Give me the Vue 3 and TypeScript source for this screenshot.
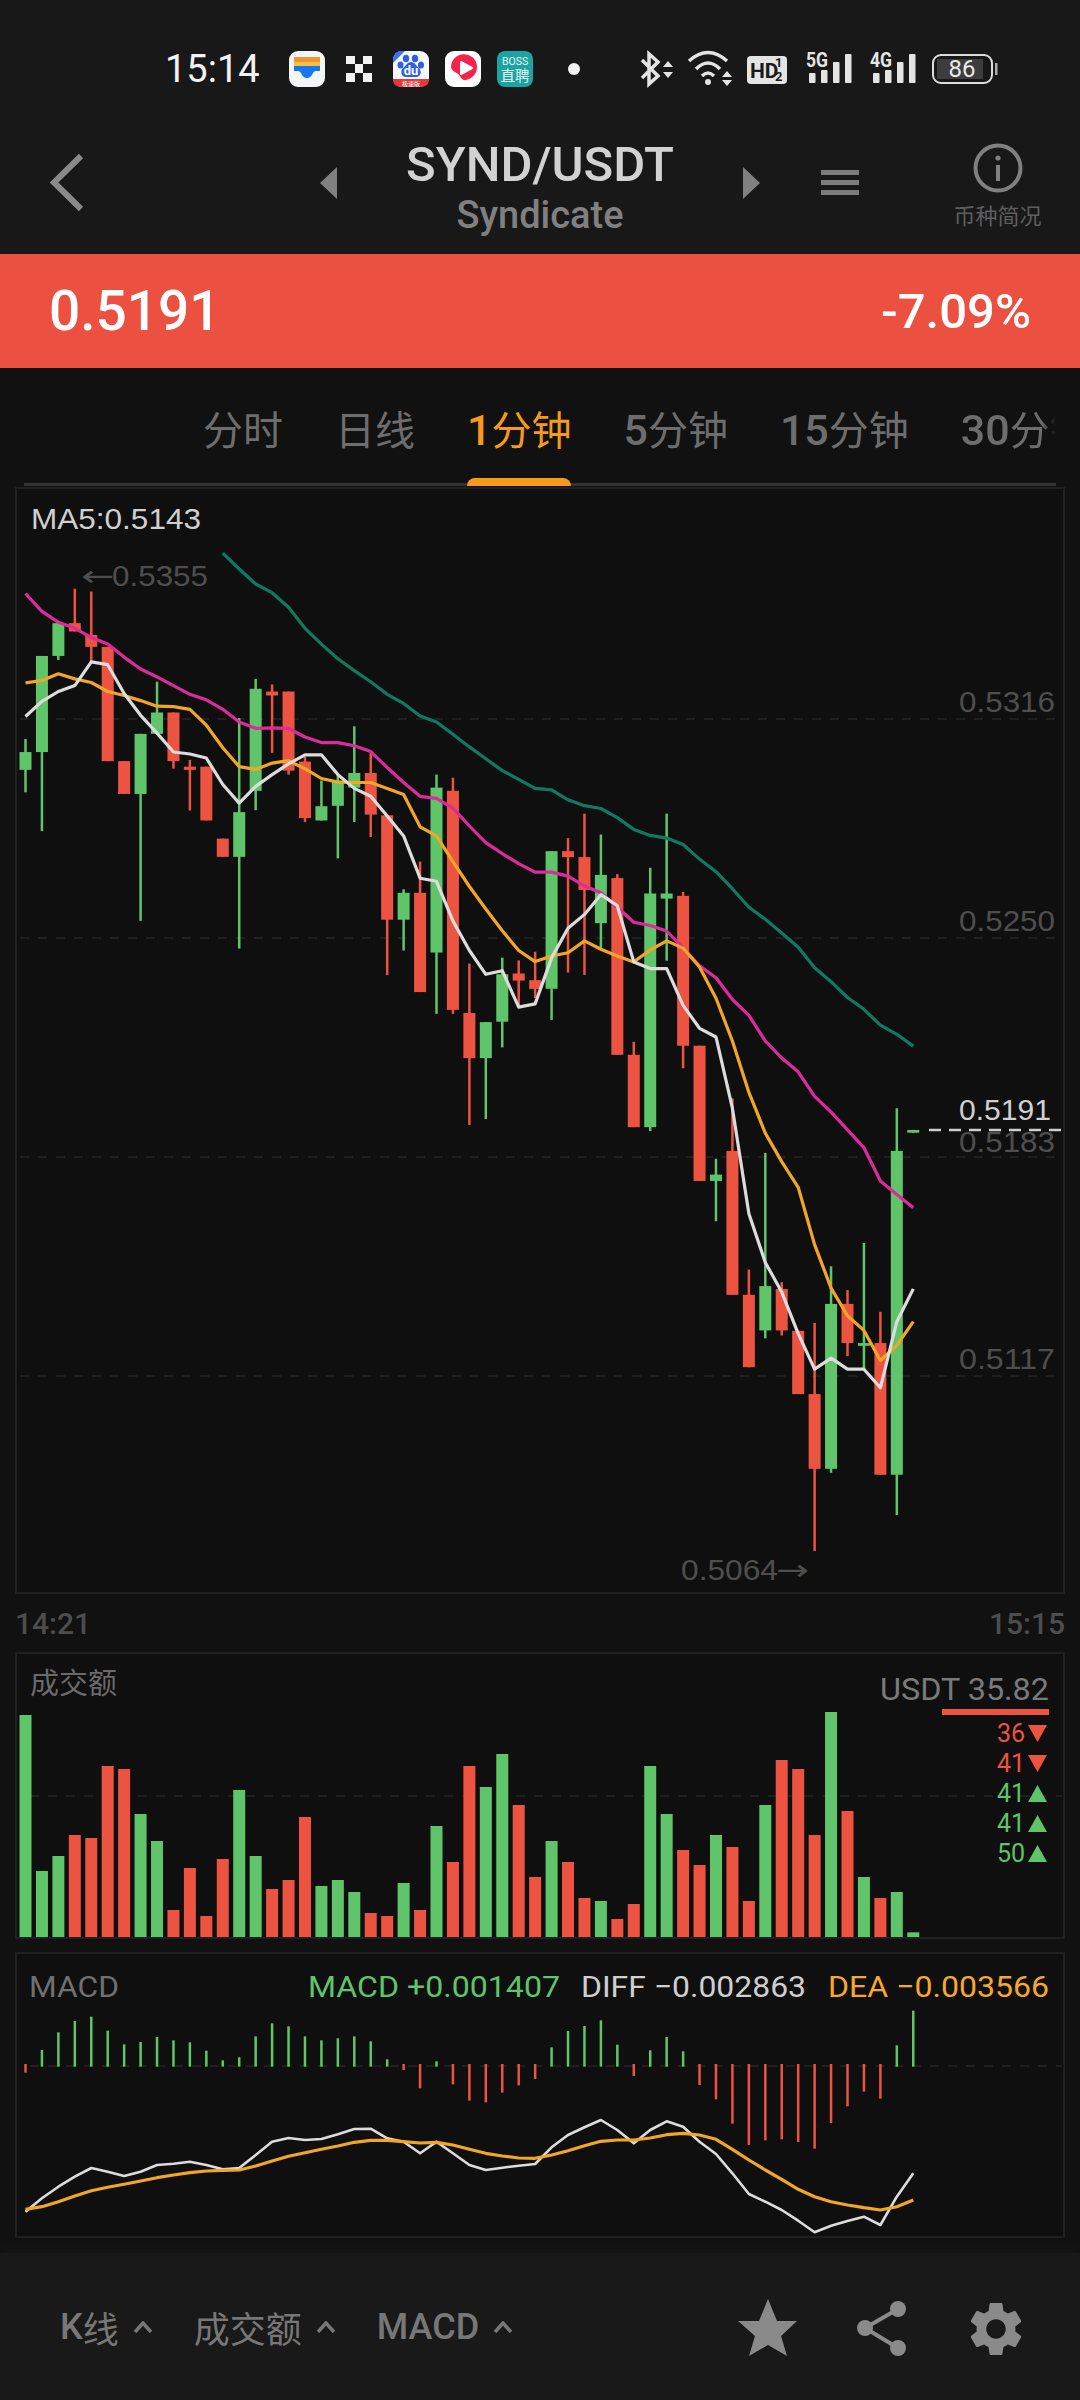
<script setup lang="ts">
type Dir = "r" | "g";

// wick top, wick bottom, body top, body bottom
type Candle = [number, number, number, number, Dir];

const X0 = 25.5;
const STEP = 16.44;
const xAt = (i: number) => X0 + STEP * i;

// traces come in two stretches of the chart
const upperY = (v: number) => 480 + v / 2.529;
const lowerY = (v: number) => 780 + v / 2.529;

const upperCandles: Candle[] = [
  [655, 790, 688, 733, "g"],
  [445, 888, 445, 688, "g"],
  [362, 455, 362, 445, "g"],
  [275, 383, 362, 383, "r"],
  [282, 460, 392, 422, "r"],
  [422, 711, 422, 711, "r"],
  [711, 794, 711, 794, "r"],
  [642, 1115, 642, 794, "g"],
  [510, 642, 588, 642, "g"],
  [588, 730, 588, 711, "r"],
  [708, 836, 725, 733, "r"],
  [725, 861, 725, 861, "r"],
  [907, 953, 907, 953, "r"],
  [602, 1185, 840, 953, "g"],
  [503, 835, 528, 786, "g"],
  [517, 690, 535, 545, "r"],
  [535, 745, 535, 735, "r"],
  [700, 865, 712, 855, "r"],
  [760, 861, 825, 861, "g"],
  [745, 957, 760, 824, "g"],
  [623, 865, 741, 778, "g"],
  [690, 903, 741, 846, "r"],
  [848, 1252, 848, 1112, "r"],
  [1035, 1190, 1044, 1112, "g"],
  [965, 1295, 1044, 1295, "r"],
  [745, 1350, 778, 1195, "g"],
  [753, 1350, 786, 1340, "r"],
  [1223, 1631, 1348, 1462, "r"],
  [1371, 1616, 1371, 1462, "g"],
  [1208, 1435, 1250, 1370, "g"],
  [1215, 1330, 1248, 1266, "r"],
  [1193, 1310, 1265, 1287, "r"],
];

const lowerCandles: Candle[] = [
  [180, 607, 180, 528, "g"],
  [147, 487, 180, 195, "r"],
  [85, 493, 195, 278, "r"],
  [138, 425, 240, 362, "g"],
  [238, 695, 248, 695, "r"],
  [662, 878, 695, 878, "r"],
  [222, 888, 287, 878, "g"],
  [85, 457, 287, 300, "g"],
  [283, 729, 293, 672, "r"],
  [672, 1014, 672, 1014, "r"],
  [958, 1116, 998, 1014, "g"],
  [805, 1302, 938, 1302, "r"],
  [1238, 1485, 1302, 1485, "r"],
  [943, 1412, 1280, 1392, "g"],
  [1270, 1405, 1287, 1392, "r"],
  [1393, 1553, 1393, 1553, "r"],
  [1373, 1950, 1553, 1742, "r"],
  [1230, 1752, 1325, 1742, "g"],
  [1290, 1457, 1325, 1424, "r"],
  [1171, 1492, 1424, 1431, "g"],
  [1345, 1757, 1424, 1757, "r"],
  [830, 1859, 938, 1757, "g"],
  [885, 892, 885, 892, "g"],
];

function toCandle(c: Candle, i: number, toY: (v: number) => number) {
  return {
    x: xAt(i),
    wickTop: toY(c[0]),
    wickBottom: toY(c[1]),
    bodyTop: toY(c[2]),
    bodyHeight: Math.max(toY(c[3]) - toY(c[2]), 2),
    dir: c[4],
  };
}

const candles = [
  ...upperCandles.map((c, i) => toCandle(c, i, upperY)),
  ...lowerCandles.map((c, i) => toCandle(c, i + upperCandles.length, lowerY)),
];

function maLine(start: number, upper: number[], lower: number[]) {
  const ys = [...upper.map(upperY), ...lower.map(lowerY)];
  return ys.map((y, i) => `${xAt(start + i).toFixed(1)},${y.toFixed(1)}`).join(" ");
}

const maLines = [
  {
    cls: "ma-teal",
    points: maLine(
      12,
      [185, 225, 263, 285, 322, 375, 415, 452, 482, 510, 542, 565, 597, 612, 643, 675, 705, 735, 757, 780],
      [25, 50, 65, 72, 95, 125, 140, 147, 163, 200, 232, 275, 322, 352, 387, 423, 475, 510, 550, 580, 620, 643, 673]
    ),
  },
  {
    cls: "ma-pink",
    points: maLine(
      0,
      [287, 332, 360, 375, 398, 415, 448, 478, 498, 520, 542, 556, 580, 612, 628, 627, 628, 650, 664, 664, 672, 687, 727, 765, 800, 805, 830, 875, 917, 945, 970, 992],
      [233, 243, 268, 285, 322, 360, 368, 382, 425, 470, 500, 555, 595, 660, 703, 738, 800, 840, 885, 930, 1014, 1048, 1082]
    ),
  },
  {
    cls: "ma-orange",
    points: maLine(
      0,
      [513, 507, 490, 503, 512, 535, 545, 558, 572, 573, 580, 620, 677, 725, 732, 716, 710, 730, 755, 764, 765, 765, 780, 795, 877, 900, 965, 1028, 1085, 1140, 1190, 1218],
      [445, 437, 407, 428, 445, 460, 430, 407, 425, 473, 552, 660, 790, 893, 965, 1030, 1175, 1285, 1355, 1392, 1468, 1430, 1370]
    ),
  },
  {
    cls: "ma-white",
    points: maLine(
      0,
      [598, 560, 535, 520, 460, 467, 540, 595, 640, 688, 693, 703, 770, 817, 775, 745, 718, 695, 695, 745, 780, 800, 850, 900, 1007, 1015, 1115, 1190, 1250, 1241, 1333, 1325],
      [450, 375, 340, 290, 318, 460, 477, 477, 570, 628, 650, 830, 1097, 1220, 1295, 1400, 1490, 1462, 1490, 1490, 1537, 1370, 1287]
    ),
  },
];

const gridLines = [719, 938, 1157, 1376];

const priceLabels = [
  { text: "MA5:0.5143", x: 31, y: 529, len: 170, cls: "lbl-light" },
  { text: "←", x: 81, y: 586, len: 33, cls: "lbl-dim lbl-arrow" },
  { text: "0.5355", x: 112, y: 586, len: 96, cls: "lbl-dim" },
  { text: "0.5316", x: 959, y: 712, len: 96, cls: "lbl-dim" },
  { text: "0.5250", x: 959, y: 931, len: 96, cls: "lbl-dim" },
  { text: "0.5183", x: 959, y: 1152, len: 96, cls: "lbl-dim" },
  { text: "0.5117", x: 959, y: 1369, len: 96, cls: "lbl-dim" },
  { text: "0.5191", x: 959, y: 1120, len: 92, cls: "lbl-light" },
  { text: "0.5064", x: 681, y: 1580, len: 97, cls: "lbl-dim" },
  { text: "→", x: 776, y: 1580, len: 33, cls: "lbl-dim lbl-arrow" },
];

const volumeTops: [number, Dir][] = [
  [375, "g"], [843, "g"], [798, "g"], [735, "r"], [744, "r"], [528, "r"], [537, "r"], [672, "g"],
  [753, "g"], [960, "r"], [834, "r"], [978, "r"], [807, "r"], [600, "g"], [798, "g"], [897, "r"],
  [870, "r"], [681, "r"], [888, "g"], [870, "g"], [906, "g"], [969, "r"], [978, "r"], [879, "g"],
  [960, "r"], [708, "g"], [816, "r"], [528, "r"], [591, "g"], [492, "g"], [645, "r"], [861, "r"],
  [753, "g"], [816, "r"], [924, "r"], [933, "g"], [987, "r"], [942, "r"], [528, "g"], [672, "g"],
  [780, "r"], [825, "r"], [735, "g"], [771, "r"], [933, "r"], [645, "g"], [510, "r"], [537, "r"],
  [735, "r"], [366, "g"], [663, "r"], [861, "g"], [924, "r"], [906, "g"], [1027, "g"],
];

const VOL_BASE = 1937;
const volumes = volumeTops.map(([v, dir], i) => {
  const y = 1590 + v / 3;
  return { x: xAt(i) - 6, y, h: VOL_BASE - y, dir };
});

const trades: { num: string; dir: Dir; y: number }[] = [
  { num: "36", dir: "r", y: 1733 },
  { num: "41", dir: "r", y: 1763 },
  { num: "41", dir: "g", y: 1793 },
  { num: "41", dir: "g", y: 1823 },
  { num: "50", dir: "g", y: 1853 },
];

const macdRaw: [number, Dir][] = [
  [398, "r"], [330, "g"], [277, "g"], [243, "g"], [230, "g"], [272, "g"], [313, "g"], [306, "g"],
  [291, "g"], [301, "g"], [307, "g"], [332, "g"], [361, "g"], [352, "g"], [289, "g"], [250, "g"],
  [259, "g"], [289, "g"], [301, "g"], [295, "g"], [289, "g"], [304, "g"], [358, "g"], [390, "r"],
  [445, "r"], [364, "g"], [433, "r"], [482, "r"], [487, "r"], [458, "r"], [436, "r"], [417, "r"],
  [322, "g"], [273, "g"], [258, "g"], [241, "g"], [314, "g"], [408, "r"], [331, "g"], [291, "g"],
  [334, "g"], [435, "r"], [478, "r"], [551, "r"], [615, "r"], [601, "r"], [598, "r"], [606, "r"],
  [626, "r"], [549, "r"], [499, "r"], [455, "r"], [476, "r"], [316, "g"], [212, "g"],
];

const macdBars = macdRaw.map(([v, dir], i) => {
  const top = dir === "g" ? v : 372;
  const bottom = dir === "g" ? 380 : v;
  return { x: xAt(i) - 1.25, y: 1940 + top / 3, h: (bottom - top) / 3, dir };
});

function macdLine(vals: number[]) {
  return vals.map((v, i) => `${xAt(i).toFixed(1)},${(1940 + v / 3).toFixed(1)}`).join(" ");
}

const diffLine = macdLine([
  815, 775, 740, 710, 684, 695, 708, 695, 675, 671, 665, 675, 688, 684, 645, 605, 594, 600, 597,
  583, 567, 566, 595, 605, 640, 605, 640, 675, 690, 683, 677, 672, 622, 585, 562, 540, 570, 610,
  570, 544, 560, 605, 642, 700, 762, 785, 810, 842, 877, 857, 843, 830, 855, 770, 700,
]);

const deaLine = macdLine([
  808, 800, 785, 768, 752, 742, 733, 723, 713, 705, 698, 693, 691, 690, 678, 663, 649, 638, 628,
  618, 607, 601, 601, 605, 609, 607, 615, 628, 640, 648, 654, 655, 645, 632, 617, 604, 600, 600,
  594, 584, 580, 585, 598, 628, 660, 690, 718, 748, 770, 785, 795, 803, 810, 800, 780,
]);

const tabs = [
  { num: "", zh: "分时" },
  { num: "", zh: "日线" },
  { num: "1", zh: "分钟", active: true },
  { num: "5", zh: "分钟" },
  { num: "15", zh: "分钟" },
  { num: "30", zh: "分钟" },
];

const signalBars = [0, 64];
</script>

<template>
  <div class="page">
    <div class="top">
      <div class="status">
        <span class="time">15:14</span>

        <svg class="app" viewBox="0 0 36 36">
          <rect width="36" height="36" rx="9" fill="#f4f5f7" />
          <rect x="5" y="6" width="26" height="5" fill="#f2933a" />
          <rect x="5" y="11" width="26" height="4" fill="#f7c23d" />
          <path d="M5 15H31V20H27Q25 20 24 22Q22 27 18 27Q14 27 12 22Q11 20 9 20H5Z" fill="#1877ee" />
        </svg>

        <svg class="app" viewBox="0 0 36 36">
          <path d="M5 5h9v8H5zM22 5h9v8h-9zM14 13h8v9h-8zM5 22h9v9H5zM22 22h9v9h-9z" fill="#f2f2f2" />
        </svg>

        <svg class="app" viewBox="0 0 36 36">
          <rect width="36" height="36" rx="9" fill="#f7f8fc" />
          <path d="M0 28H36V28Q36 36 27 36H9Q0 36 0 28Z" fill="#e23a3a" />
          <text x="18" y="34.5" class="tiny">极速版</text>
          <path d="M0 9Q0 0 9 0H12L0 12Z" fill="#3f6ff0" />
          <ellipse cx="7.5" cy="14" rx="3" ry="3.6" fill="#2f5ee5" />
          <ellipse cx="13" cy="7.5" rx="3.2" ry="3.8" fill="#2f5ee5" />
          <ellipse cx="22" cy="7.5" rx="3.2" ry="3.8" fill="#2f5ee5" />
          <ellipse cx="28" cy="14" rx="3" ry="3.6" fill="#2f5ee5" />
          <path d="M18 11C22 11 23 15 26 17C29 20 28 26 23 26H13C8 26 7 20 10 17C13 15 14 11 18 11Z" fill="#2f5ee5" />
          <text x="18" y="24" class="du">du</text>
        </svg>

        <svg class="app" viewBox="0 0 36 36">
          <rect width="36" height="36" rx="9" fill="#fff" />
          <path d="M6 16A13 13 0 1 1 21 29C17 30 16 26 14 24C12 21 7 21 6 16Z" fill="#f4234c" />
          <path d="M16 11L27 17L16 23Z" fill="#fff" stroke="#fff" stroke-width="2" stroke-linejoin="round" />
        </svg>

        <svg class="app" viewBox="0 0 36 36">
          <rect width="36" height="36" rx="8" fill="#1ba4a3" />
          <text x="18" y="14" class="boss">BOSS</text>
          <text x="18" y="30" class="boss-zh">直聘</text>
        </svg>

        <span class="dot"></span>

        <svg class="sys" viewBox="632 45 370 48">
          <path d="M642 60L658 76L649 84V54L658 62L642 78" class="sys-line" />
          <path d="M663 67L668 61L673 67ZM663 72L668 78L673 72Z" class="sys-fill" />
          <path d="M689 61Q708 44 727 61M696 69Q708 57 720 69M702 76Q708 70 714 76" class="sys-line" />
          <circle cx="708" cy="82" r="3" class="sys-fill" />
          <path d="M722 77L727 71L732 77ZM722 80L727 86L732 80Z" class="sys-fill" />
          <rect x="747" y="56" width="40" height="28" rx="4" class="sys-fill" />
          <text x="750" y="78" class="hd">HD</text>
          <text x="775" y="67" class="hd-small">1</text>
          <text x="775" y="81" class="hd-small">2</text>
          <g v-for="dx in signalBars" :key="dx" :transform="`translate(${dx} 0)`">
            <text x="806" y="67" class="net" textLength="22" lengthAdjust="spacingAndGlyphs">{{ dx ? "4G" : "5G" }}</text>
            <rect x="809" y="73" width="6.5" height="10" rx="1" class="sys-fill" />
            <rect x="821" y="70" width="6.5" height="13" rx="1" class="sys-fill" />
            <rect x="833" y="62" width="6.5" height="21" rx="1" class="sys-fill" />
            <rect x="845" y="54" width="6.5" height="29" rx="1" class="sys-fill" />
          </g>
          <rect x="933" y="55" width="59" height="28" rx="8" fill="none" stroke="#ddd" stroke-width="2" />
          <rect x="937" y="59" width="46" height="20" fill="#3c3c3c" />
          <text x="962" y="77" class="batt">86</text>
          <rect x="995" y="63" width="2.5" height="12" fill="#aaa" />
        </svg>
      </div>

      <div class="header">
        <svg class="back" width="37" height="59" viewBox="0 0 37 59">
          <path d="M33 3L6 29.5L33 56" fill="none" stroke="#8a8a8a" stroke-width="6" />
        </svg>
        <span class="tri tri-left"></span>
        <div class="title">
          <div class="pair">SYND/USDT</div>
          <div class="name">Syndicate</div>
        </div>
        <span class="tri tri-right"></span>
        <div class="menu"><i></i><i></i><i></i></div>
        <div class="info">
          <svg width="50" height="50" viewBox="0 0 50 50">
            <circle cx="25" cy="25" r="22.5" fill="none" stroke="#808080" stroke-width="4" />
            <rect x="23" y="22" width="4" height="16" fill="#808080" />
            <circle cx="25" cy="15" r="2.6" fill="#808080" />
          </svg>
          <span>币种简况</span>
        </div>
      </div>
    </div>

    <div class="price-bar">
      <span class="price">0.5191</span>
      <span class="change">-7.09%</span>
    </div>

    <div class="tabs">
      <div v-for="tab in tabs" :key="tab.num + tab.zh" class="tab" :class="{ active: tab.active }">
        <b>{{ tab.num }}</b>{{ tab.zh }}
      </div>
    </div>

    <div class="panel main-panel">
      <svg class="chart" viewBox="17 489 1046 1103">
        <line v-for="y in gridLines" :key="y" x1="20" x2="1060" :y1="y" :y2="y" class="grid" />

        <g v-for="(c, i) in candles" :key="i" :class="c.dir">
          <rect :x="c.x - 1.25" :y="c.wickTop" width="2.5" :height="c.wickBottom - c.wickTop" />
          <rect :x="c.x - 6" :y="c.bodyTop" width="12" :height="c.bodyHeight" />
        </g>

        <polyline v-for="line in maLines" :key="line.cls" :points="line.points" :class="line.cls" />

        <text
          v-for="l in priceLabels"
          :key="l.text"
          :x="l.x"
          :y="l.y"
          :textLength="l.len"
          lengthAdjust="spacingAndGlyphs"
          class="lbl"
          :class="l.cls"
        >{{ l.text }}</text>

        <line x1="929" x2="1064" y1="1130" y2="1130" class="last-price" />
      </svg>
    </div>

    <div class="axis">
      <span>14:21</span>
      <span>15:15</span>
    </div>

    <div class="panel vol-panel">
      <svg class="chart" viewBox="17 1654 1046 283">
        <line x1="30" x2="1062" y1="1796" y2="1796" class="grid" />
        <g v-for="(v, i) in volumes" :key="i" :class="v.dir">
          <rect :x="v.x" :y="v.y" width="12" :height="v.h" />
        </g>
        <text x="30" y="1694" class="sub-title">成交额</text>
        <text x="880" y="1700" class="usdt" textLength="169" lengthAdjust="spacingAndGlyphs">USDT 35.82</text>
        <rect x="942" y="1709" width="107" height="6" class="bar-r" />
        <g v-for="(t, i) in trades" :key="i" :class="t.dir">
          <text x="997" :y="t.y + 9" class="trade">{{ t.num }}</text>
          <polygon
            :points="
              t.dir === 'r'
                ? `1028,${t.y - 8} 1047,${t.y - 8} 1037.5,${t.y + 9}`
                : `1028,${t.y + 9} 1047,${t.y + 9} 1037.5,${t.y - 8}`
            "
          />
        </g>
      </svg>
    </div>

    <div class="panel macd-panel">
      <svg class="chart" viewBox="17 1954 1046 282">
        <line x1="30" x2="1062" y1="2066" y2="2066" class="grid" />
        <g v-for="(b, i) in macdBars" :key="i" :class="b.dir">
          <rect :x="b.x" :y="b.y" width="2.5" :height="b.h" />
        </g>
        <polyline :points="diffLine" class="ma-white thin" />
        <polyline :points="deaLine" class="ma-orange" />
        <text x="29" y="1997" class="macd-text c-gray" textLength="90" lengthAdjust="spacingAndGlyphs">MACD</text>
        <text x="308" y="1997" class="macd-text c-green" textLength="252" lengthAdjust="spacingAndGlyphs">MACD +0.001407</text>
        <text x="581" y="1997" class="macd-text c-light" textLength="225" lengthAdjust="spacingAndGlyphs">DIFF −0.002863</text>
        <text x="828" y="1997" class="macd-text c-orange" textLength="221" lengthAdjust="spacingAndGlyphs">DEA −0.003566</text>
      </svg>
    </div>

    <div class="bottom">
      <div class="switch"><b>K</b>线<svg class="caret" viewBox="0 0 20 12"><path d="M2 11L10 2L18 11" /></svg></div>
      <div class="switch zh-only">成交额<svg class="caret" viewBox="0 0 20 12"><path d="M2 11L10 2L18 11" /></svg></div>
      <div class="switch"><b>MACD</b><svg class="caret" viewBox="0 0 20 12"><path d="M2 11L10 2L18 11" /></svg></div>

      <svg class="actions" viewBox="730 2290 300 72">
        <polygon points="768,2298 777,2320 797,2320 781,2335 787,2355 768,2344 749,2355 755,2335 738,2320 759,2320" />
        <path d="M898 2308L865 2327L898 2347" class="share-line" />
        <circle cx="898" cy="2308" r="8" />
        <circle cx="865" cy="2327" r="8" />
        <circle cx="898" cy="2347" r="8" />
        <g transform="translate(963.6 2295.6) scale(2.7)">
          <path
            fill-rule="evenodd"
            d="M19.14 12.94c.04-.3.06-.61.06-.94 0-.32-.02-.64-.07-.94l2.03-1.58c.18-.14.23-.41.12-.61l-1.92-3.32c-.12-.22-.37-.29-.59-.22l-2.39.96c-.5-.38-1.03-.7-1.62-.94l-.36-2.54c-.04-.24-.24-.41-.48-.41h-3.84c-.24 0-.43.17-.47.41l-.36 2.54c-.59.24-1.13.57-1.62.94l-2.39-.96c-.22-.08-.47 0-.59.22L2.74 8.87c-.12.21-.08.47.12.61l2.03 1.58c-.05.3-.09.63-.09.94s.02.64.07.94l-2.03 1.58c-.18.14-.23.41-.12.61l1.92 3.32c.12.22.37.29.59.22l2.39-.96c.5.38 1.03.7 1.62.94l.36 2.54c.05.24.24.41.48.41h3.84c.24 0 .44-.17.47-.41l.36-2.54c.59-.24 1.13-.56 1.62-.94l2.39.96c.22.08.47 0 .59-.22l1.92-3.32c.12-.22.07-.47-.12-.61l-2.01-1.58zM12 15.6c-1.98 0-3.6-1.62-3.6-3.6s1.62-3.6 3.6-3.6 3.6 1.62 3.6 3.6-1.62 3.6-3.6 3.6z"
          />
        </g>
      </svg>
    </div>
  </div>
</template>

<style scoped>
.page {
  width: 1080px;
  height: 2400px;
  display: flex;
  flex-direction: column;
  background: #111;
  font-family: Roboto, "Noto Sans CJK SC", sans-serif;
  overflow: hidden;
}

.top {
  background: #181818;
  height: 254px;
}

.status {
  height: 138px;
  display: flex;
  align-items: center;
  padding-left: 165px;
}

.time {
  width: 124px;
  color: #f2f2f2;
  font-size: 38px;
}

.app {
  width: 36px;
  height: 36px;
  margin-right: 16px;
}

.dot {
  width: 12px;
  height: 12px;
  margin-left: 19px;
  border-radius: 50%;
  background: #f2f2f2;
}

.sys {
  width: 370px;
  height: 48px;
  margin-left: 52px;
}

.sys-line {
  fill: none;
  stroke: #e4e4e4;
  stroke-width: 3.5;
}

.sys-fill {
  fill: #e4e4e4;
}

.hd {
  fill: #1a1a1a;
  font-size: 21px;
  font-weight: 700;
}

.hd-small {
  fill: #1a1a1a;
  font-size: 13px;
  font-weight: 700;
}

.net {
  fill: #e4e4e4;
  font-size: 20px;
  font-weight: 700;
}

.batt {
  fill: #e8e8e8;
  font-size: 24px;
  text-anchor: middle;
}

.tiny {
  fill: #fff;
  font-size: 6px;
  text-anchor: middle;
}

.du {
  fill: #fff;
  font-size: 13px;
  font-weight: 700;
  text-anchor: middle;
}

.boss {
  fill: #e6f7f6;
  font-size: 10.5px;
  text-anchor: middle;
}

.boss-zh {
  fill: #e6f7f6;
  font-size: 14.5px;
  text-anchor: middle;
}

.header {
  height: 116px;
  display: flex;
  align-items: flex-start;
  padding-left: 48px;
}

.back {
  margin-top: 15px;
}

.tri {
  width: 0;
  height: 0;
  margin-top: 29px;
  border-top: 16px solid transparent;
  border-bottom: 16px solid transparent;
}

.tri-left {
  margin-left: 235px;
  border-right: 17px solid #808080;
}

.tri-right {
  border-left: 17px solid #808080;
}

.title {
  width: 406px;
  text-align: center;
}

.pair {
  color: #d2d2d2;
  font-size: 49px;
  font-weight: 500;
  line-height: 54px;
}

.name {
  color: #808080;
  font-size: 38px;
  font-weight: 500;
  line-height: 46px;
}

.menu {
  width: 38px;
  margin: 32px 0 0 61px;
  display: flex;
  flex-direction: column;
  gap: 5.5px;
}

.menu i {
  height: 4.5px;
  background: #7c7c7c;
}

.info {
  width: 85px;
  margin: 5px 0 0 96px;
  display: flex;
  flex-direction: column;
  align-items: center;
  gap: 11px;
}

.info span {
  color: #5e5e5e;
  font-size: 22px;
  line-height: 26px;
  white-space: nowrap;
}

.price-bar {
  height: 114px;
  display: flex;
  align-items: center;
  justify-content: space-between;
  padding: 0 49px;
  background: #eb5040;
  color: #fff;
  font-weight: 500;
}

.price {
  font-size: 55px;
}

.change {
  font-size: 49px;
}

.tabs {
  position: relative;
  height: 118px;
  margin: 0 24px 0;
  padding-left: 179px;
  box-sizing: border-box;
  display: flex;
  align-items: flex-start;
  gap: 52px;
  border-bottom: 3px solid #333;
  white-space: nowrap;
}

.tab {
  position: relative;
  height: 115px;
  padding-top: 36px;
  box-sizing: border-box;
  color: #6d6d6d;
  font-size: 40px;
  line-height: 52px;
}

.tab:last-child {
  width: 98px;
  overflow: hidden;
  -webkit-mask-image: linear-gradient(to right, #000 85%, transparent);
  mask-image: linear-gradient(to right, #000 85%, transparent);
}

.tab b {
  font-size: 43px;
  font-weight: 500;
}

.active {
  color: #f59a1b;
}

.active::after {
  content: "";
  position: absolute;
  left: 0;
  right: 0;
  bottom: -3px;
  height: 8px;
  border-radius: 8px 8px 0 0;
  background: #f59a1b;
}

.panel {
  margin: 0 15px;
  border: 2px solid #202020;
  box-sizing: border-box;
  background: #0f0f0f;
}

.main-panel {
  height: 1107px;
  margin-top: 1px;
}

.vol-panel {
  height: 287px;
}

.macd-panel {
  height: 286px;
  margin-top: 13px;
}

.chart {
  display: block;
  width: 100%;
  height: 100%;
  overflow: visible;
}

.grid {
  stroke: #262626;
  stroke-width: 1.5;
  stroke-dasharray: 9 9;
}

.r rect,
.r polygon {
  fill: #ec5340;
}

.g rect,
.g polygon {
  fill: #5fc46a;
}

.r text {
  fill: #ec5340;
}

.g text {
  fill: #5fc46a;
}

.bar-r {
  fill: #ec5340;
}

polyline {
  fill: none;
  stroke-width: 3.2;
  stroke-linejoin: round;
}

.ma-teal {
  stroke: #0f7a5e;
}

.ma-pink {
  stroke: #dd2a9c;
}

.ma-orange {
  stroke: #f2a626;
}

.ma-white {
  stroke: #dcdcdc;
}

.thin {
  stroke-width: 2.6;
}

.lbl {
  font-family: "Liberation Sans", sans-serif;
  font-size: 29px;
}

.lbl-arrow {
  font-family: "DejaVu Sans", sans-serif;
}

.lbl-light {
  fill: #d0d0d0;
}

.lbl-dim {
  fill: #4e4e4e;
}

.last-price {
  stroke: #cfcfcf;
  stroke-width: 2.5;
  stroke-dasharray: 12 8;
}

.axis {
  height: 58px;
  margin: 0 15px;
  display: flex;
  align-items: center;
  justify-content: space-between;
  color: #4d4d4d;
  font-size: 30px;
  font-weight: 500;
}

.sub-title {
  fill: #6a6a6a;
  font-size: 29px;
}

.usdt {
  fill: #7a7a7a;
  font-size: 32px;
}

.trade {
  font-size: 25px;
}

.macd-text {
  font-size: 30px;
}

.c-gray {
  fill: #707070;
}

.c-green {
  fill: #5fc46a;
}

.c-light {
  fill: #cfcfcf;
}

.c-orange {
  fill: #f5a82e;
}

.bottom {
  height: 147px;
  margin-top: auto;
  display: flex;
  align-items: center;
  padding: 0 0 0 60px;
  box-sizing: border-box;
  background: #191919;
  box-shadow: 0 -6px 10px #19191980;
  color: #777;
  font-size: 36px;
}

.switch {
  display: flex;
  align-items: center;
  margin-right: 41px;
}

.switch b {
  font-weight: 500;
}

.caret {
  width: 20px;
  height: 12px;
  margin-left: 14px;
  fill: none;
  stroke: #777;
  stroke-width: 3.5;
}

.actions {
  width: 300px;
  height: 72px;
  margin-left: auto;
  margin-right: 50px;
  fill: #8a8a8a;
}

.share-line {
  fill: none;
  stroke: #8a8a8a;
  stroke-width: 4;
}
</style>

<style>
html,
body {
  margin: 0;
  background: #111;
}
</style>
